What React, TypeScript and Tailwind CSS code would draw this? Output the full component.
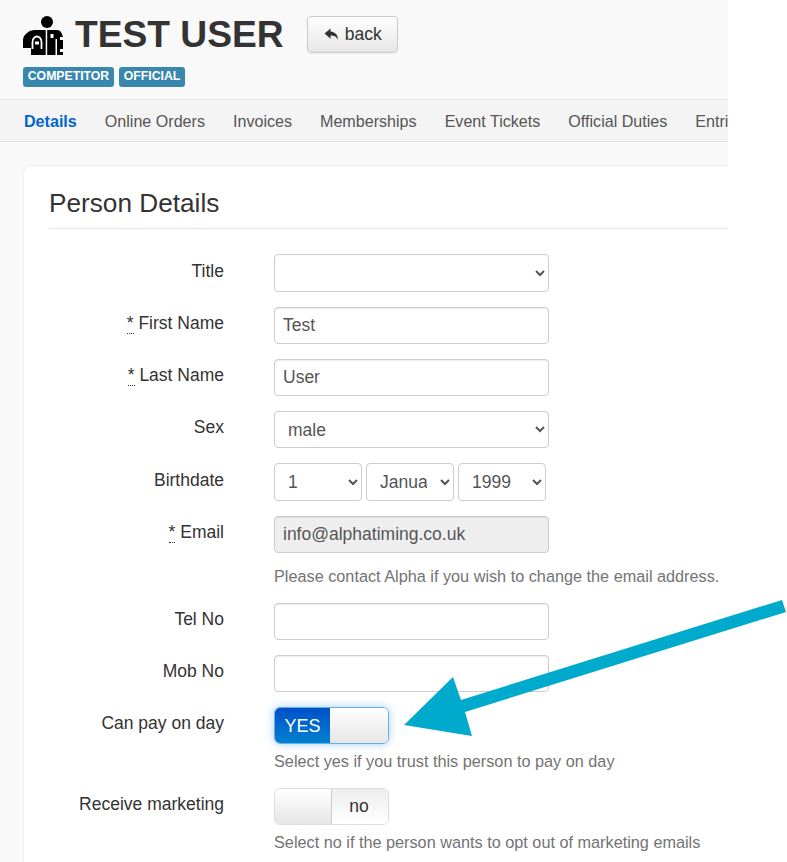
import type { ReactNode } from 'react';

const navItems = ['Online Orders', 'Invoices', 'Memberships', 'Event Tickets', 'Official Duties', 'Entries'];

function Required() {
    return <abbr className="border-b border-dotted border-[#333] no-underline cursor-help" title="required">*</abbr>;
}

function Row({ label, children, tall }: { label: ReactNode; children: ReactNode; tall?: boolean }) {
    return (
        <div className="mb-[15px] flex gap-[50px]">
            <label className={`w-[175px] shrink-0 text-right text-[17.5px] leading-6 text-[#333] ${tall ? 'pt-[5px]' : 'pt-[4px]'}`}>{label}</label>
            <div className="w-[275px] shrink-0">{children}</div>
        </div>
    );
}

function TextInput({ value, disabled }: { value?: string; disabled?: boolean }) {
    return (
        <input
            readOnly
            value={value ?? ''}
            className={`block h-[37px] w-full rounded border border-[#ccc] px-2 pb-px text-[17.5px] text-[#555] shadow-[inset_0_1px_1px_rgba(0,0,0,0.075)] outline-none ${disabled ? 'bg-[#eee]' : 'bg-white'}`}
        />
    );
}

function Select({ options, className }: { options: string[]; className: string }) {
    return (
        <select className={`rounded border border-[#ccc] bg-white pl-[9px] pr-[10px] text-[17.5px] text-[#555] outline-none ${className}`}>
            {options.map((o) => (
                <option key={o}>{o}</option>
            ))}
        </select>
    );
}

function Help({ children, className }: { children: ReactNode; className: string }) {
    return <p className={`mb-[2px] whitespace-nowrap text-[16.25px] leading-5 text-[#737373] ${className}`}>{children}</p>;
}

function PersonIcon() {
    return (
        <svg viewBox="0 0 40 40" className="h-10 w-10 shrink-0">
            <circle cx="24" cy="7" r="6" fill="#000" />
            <path d="M12 15H34C38 15 40 20 40 24V40H8V33H0V25C0 20 6 15 12 15Z" fill="#000" />
            <path d="M22.700 15h1.500v25h-1.500zM32.500 24h1.500v16h-1.500z" fill="#fff" />
            <path d="M27.500 19h3v4h-3zM37 22h3v3h-3zM37 34h3v3h-3z" fill="#fff" />
            <path d="M9.500 34V27C9.500 23.500 12 21.500 14 21.500S18.500 23.500 18.500 27V34" fill="none" stroke="#fff" strokeWidth="1.800" />
            <path d="M12 26.500h4v3h-4z" fill="#fff" />
        </svg>
    );
}

function ReplyIcon() {
    return (
        <svg viewBox="0 0 16 14" className="h-[13px] w-[17px] shrink-0" fill="#333">
            <path d="M7 0.500 0.500 6 7 11.500V8.200c3.500 0 6 .8 8 4.300 0-4.500-2.500-8-8-8.700z" />
        </svg>
    );
}

function Arrow() {
    return (
        <svg className="pointer-events-none absolute left-0 top-0" width="787" height="862" viewBox="0 0 787 862">
            <polygon points="782,600 786,612 465,712 472,736 404,725 453,677 461,700" fill="#00aacc" />
        </svg>
    );
}

export default function App() {
    return (
        <div className="relative h-[862px] w-[787px] overflow-hidden bg-white font-['Liberation_Sans',Arial,sans-serif] text-base text-[#333]">
            <div className="h-full w-[728px] overflow-hidden bg-[#f9f9f9]">
                {/* Header */}
                <div className="h-[99px] pl-[23px] pt-[16px]">
                    <div className="flex h-[37px] items-center">
                        <div className="flex items-center gap-3">
                            <PersonIcon />
                            <h1 className="mb-0.5 text-[37.2px] font-bold leading-10 text-[#333]">TEST USER</h1>
                        </div>
                        <button className="ml-[23px] flex h-[37px] w-[91px] items-center justify-center gap-[5px] rounded border border-[#ccc] bg-linear-to-b from-white to-[#e6e6e6] text-[17.5px] text-[#333] shadow-[0_1px_2px_rgba(0,0,0,0.05)]">
                            <ReplyIcon />
                            back
                        </button>
                    </div>
                    <div className="mt-[14px] flex gap-[5px]">
                        <span className="flex h-5 w-[91px] items-center justify-center rounded-[3px] bg-[#3a87ad] pb-px text-[12.25px] font-bold text-white">COMPETITOR</span>
                        <span className="flex h-5 w-[66px] items-center justify-center rounded-[3px] bg-[#3a87ad] pb-px text-[12.25px] font-bold text-white">OFFICIAL</span>
                    </div>
                </div>

                {/* Tabs */}
                <nav className="flex h-[43px] items-center gap-[28px] overflow-hidden whitespace-nowrap border-y border-[#e7e7e7] bg-[#f4f4f4] pl-[24px] pt-px text-[16.1px]">
                    <a className="font-bold text-[#0066cc]">Details</a>
                    {navItems.map((item) => (
                        <a key={item} className="text-[#555]">{item}</a>
                    ))}
                </nav>

                {/* Card */}
                <div className="ml-[23px] mt-[23px] w-[800px] rounded-lg border border-[#eee] bg-white pb-10 pl-[25px] pt-[19px]">
                    <h2 className="h-[44px] w-[700px] border-b border-[#e5e5e5] text-[26.200px] leading-[36px] text-[#333]">Person Details</h2>
                    <form className="mt-[25px]">
                        <Row label="Title" tall>
                            <Select options={['']} className="block h-[38px] w-full" />
                        </Row>
                        <Row label={<><Required /> First Name</>}>
                            <TextInput value="Test" />
                        </Row>
                        <Row label={<><Required /> Last Name</>}>
                            <TextInput value="User" />
                        </Row>
                        <Row label="Sex">
                            <Select options={['male', 'female']} className="block h-[37px] w-full" />
                        </Row>
                        <Row label="Birthdate" tall>
                            <div className="flex gap-1">
                                <Select options={['1', '2', '3']} className="h-[38px] w-[88px]" />
                                <Select options={['January', 'February']} className="h-[38px] w-[88px]" />
                                <Select options={['1999', '2000']} className="h-[38px] w-[88px]" />
                            </div>
                        </Row>
                        <Row label={<><Required /> Email</>}>
                            <TextInput value="info@alphatiming.co.uk" disabled />
                            <Help className="mt-[13px]">Please contact Alpha if you wish to change the email address.</Help>
                        </Row>
                        <Row label="Tel No">
                            <TextInput />
                        </Row>
                        <Row label="Mob No">
                            <TextInput />
                        </Row>
                        <Row label="Can pay on day">
                            <div className="flex h-[37px] w-[115px] overflow-hidden rounded-md border border-[#66afe9] shadow-[0_0_8px_rgba(102,175,233,0.6)]">
                                <span className="flex w-[55px] items-center justify-center bg-linear-to-b from-[#0050c8] to-[#0080d0] text-lg text-white">YES</span>
                                <span className="flex-1 bg-linear-to-b from-white to-[#e6e6e6]" />
                            </div>
                            <Help className="mt-[7px]">Select yes if you trust this person to pay on day</Help>
                        </Row>
                        <Row label="Receive marketing">
                            <div className="flex h-[37px] w-[115px] overflow-hidden rounded-md border border-[#ddd]">
                                <span className="w-[57px] border-r border-[#ccc] bg-linear-to-b from-white to-[#e6e6e6]" />
                                <span className="flex flex-1 items-center justify-center bg-linear-to-b from-[#eee] to-white pr-0.5 text-[17.5px] text-[#333]">no</span>
                            </div>
                            <Help className="mt-[7px]">Select no if the person wants to opt out of marketing emails</Help>
                        </Row>
                    </form>
                </div>
            </div>
            <Arrow />
        </div>
    );
}
